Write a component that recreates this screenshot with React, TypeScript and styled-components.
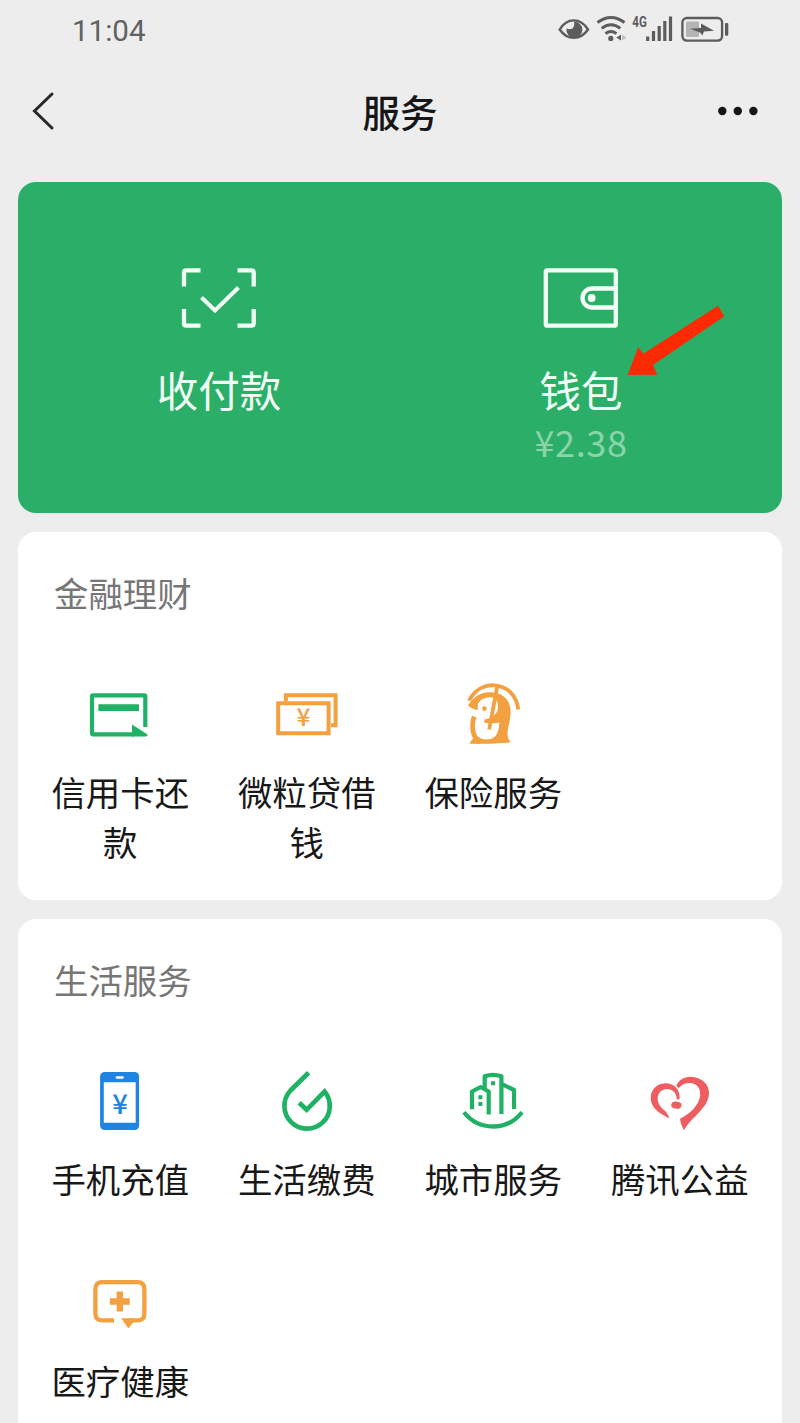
import React from "react";
import styled, { createGlobalStyle } from "styled-components";

const GlobalStyle = createGlobalStyle`
  * { box-sizing: border-box; }
  body {
    margin: 0;
    background: #ededed;
    font-family: "Noto Sans CJK SC", "Noto Sans", sans-serif;
  }
`;

const GREEN = "#1fb264";
const ORANGE = "#f2a040";
const BLUE = "#1f83e0";
const RED = "#ee5e60";
const STATUS = "#5c5c5c";

const Screen = styled.main`
  width: 800px;
  height: 1423px;
  overflow: hidden;
  background: #ededed;
`;

const StatusBar = styled.div`
  display: flex;
  align-items: center;
  justify-content: space-between;
  height: 60px;
  padding: 0 71px 0 72px;
`;

const Clock = styled.span`
  font: 400 29.5px/36px Roboto, sans-serif;
  color: #616161;
  padding-top: 2px;
`;

const StatusIcons = styled.div`
  display: flex;
  align-items: center;
  height: 60px;
`;

const NavBar = styled.header`
  display: grid;
  grid-template-columns: 100px 1fr 100px;
  align-items: center;
  height: 104px;
`;

const NavIcon = styled.div<{ $end?: boolean }>`
  display: flex;
  justify-content: ${(p) => (p.$end ? "flex-end" : "flex-start")};
  padding: ${(p) => (p.$end ? "0 40px 2px 0" : "0 0 2px 30px")};
`;

const PageTitle = styled.h1`
  margin: 0;
  padding-bottom: 2px;
  text-align: center;
  font-size: 37.5px;
  line-height: 50px;
  font-weight: 500;
  color: #161616;
`;

const Content = styled.div`
  display: flex;
  flex-direction: column;
  gap: 19px;
  padding: 18px 18px 0;
`;

const PayCard = styled.section`
  position: relative;
  display: grid;
  grid-template-columns: 1fr 1fr;
  height: 331px;
  padding: 76px 20px 0;
  border-radius: 18px;
  background: #2bae67;
`;

const PayItem = styled.div`
  display: flex;
  flex-direction: column;
  align-items: center;
`;

const PayLabel = styled.div`
  margin-top: 21px;
  font-size: 41.5px;
  line-height: 60px;
  color: #f2fff6;
`;

const Amount = styled.div`
  font-size: 36px;
  line-height: 44px;
  letter-spacing: 0.6px;
  color: #8bd3a9;
`;

const Arrow = styled.svg`
  position: absolute;
  left: 609px;
  top: 123px;
`;

const Card = styled.section<{ $tall?: boolean }>`
  height: ${(p) => (p.$tall ? "560px" : "368px")};
  flex-shrink: 0;
  padding: 35px 9px 0;
  border-radius: 18px;
  background: #fff;
`;

const CardTitle = styled.h2`
  margin: 0 0 62px;
  padding-left: 27px;
  font-size: 34.4px;
  line-height: 50px;
  font-weight: 400;
  color: #767676;
`;

const Grid = styled.div`
  display: grid;
  grid-template-columns: repeat(4, 1fr);
  row-gap: 65px;
`;

const Item = styled.div`
  display: flex;
  flex-direction: column;
  align-items: center;
  gap: 15px;
  padding: 0 20px;
`;

const ItemLabel = styled.div`
  font-size: 34.4px;
  line-height: 50px;
  text-align: center;
  color: #181818;
`;

const Icon = ({ children }: { children: React.ReactNode }) => (
  <svg width="72" height="72" viewBox="0 0 72 72" fill="none">
    {children}
  </svg>
);

const Yen = ({ x, y, size, color }: { x: number; y: number; size: number; color: string }) => (
  <text
    x={x}
    y={y}
    fontSize={size}
    fill={color}
    textAnchor="middle"
    fontFamily='"Noto Sans CJK SC", sans-serif'
    fontWeight="500"
  >
    ¥
  </text>
);

const CreditCardIcon = () => (
  <Icon>
    <path d="M61.300 48V17.300q0-1-1-1H9q-1 0-1 1V54.300q0 1 1 1H50" stroke={GREEN} strokeWidth="4.200" />
    <path d="M14.4 25.3H55V32H14.4Z" fill={GREEN} />
    <path d="M48 45.500 63.500 55.500Q64 57.300 61.500 57.400H48Z" fill={GREEN} />
  </Icon>
);

const LoanIcon = () => (
  <Icon>
    <path d="M7.2 24.3H57.6V54.3H7.2Z" stroke={ORANGE} strokeWidth="4" />
    <path d="M14.900 22.300V16.200H64.600V46.200H60" stroke={ORANGE} strokeWidth="4" />
    <Yen x={32.6} y={47.2} size={24.5} color={ORANGE} />
  </Icon>
);

const InsuranceIcon = () => (
  <Icon>
    <path d="M12 21.700C17.500 11 27 5.800 37 6.300C50.500 7 59.500 16.500 61.300 30.500" stroke={ORANGE} strokeWidth="3.800" />
    <path d="M11 26.500C17 17 25 12.500 34.500 13.300C46.500 14 53.300 21.500 53.600 32C53.800 42 50.300 49 50.500 55C50.600 59 52 61.500 53.800 63.200C42 64.800 24 65.200 12.700 64.800C13 62.500 15 60.700 16.200 59.500C12 52 13 43 15 36.500L19.500 38.500C17.500 44 17 51 20 56.500C24 61.800 34 61.800 38.500 57C42 52.500 42 46 42.500 43.500C38.500 44.500 34 44.800 27 43.500L27.500 40.500C33 39.500 38.500 36.500 40.500 31.500C42 25 40 18.500 34.500 18.200C27.500 18 23.500 20.500 21 24.500L20.500 31C17 30.500 14 29 11 26.500Z" fill={ORANGE} />
    <path d="M40.300 7 32.200 50.500" stroke={ORANGE} strokeWidth="3.800" />
    <circle cx="27.400" cy="29.600" r="2.300" fill={ORANGE} />
  </Icon>
);

const PhoneIcon = () => (
  <Icon>
    <rect x="16.1" y="6" width="39" height="58" rx="4.5" fill={BLUE} />
    <path d="M19.800 16.300H51.700V56.700H19.800Z" fill="#fff" />
    <rect x="31.700" y="10.200" width="8" height="2.500" rx="1" fill="#fff" />
    <Yen x={36} y={47.5} size={27.5} color={BLUE} />
  </Icon>
);

const DropIcon = () => (
  <Icon>
    <path d="M37.600 6.700 19.500 24.500A22.700 22.700 0 1 0 53.600 25.500L35.600 43.800 28.200 36.800" stroke={GREEN} strokeWidth="4.700" />
  </Icon>
);

const CityIcon = () => (
  <Icon>
    <path d="M7 46.300Q18 60.500 36 60.500T65 46.300" stroke={GREEN} strokeWidth="4.300" />
    <path d="M15 43.300V25.500L23.700 21 31.700 25.500V48.500M27.700 23V10.300Q36 7.500 44.400 10.300V48M44.400 17.800 57 24V43" stroke={GREEN} strokeWidth="4.200" strokeLinejoin="round" />
    <path d="M34 15.300h4v4h-4ZM21.400 29.300h4v4h-4ZM21.400 36h4v4h-4Z" fill={GREEN} />
  </Icon>
);

const HeartIcon = () => (
  <Icon>
    <path d="M35.600 33.300C36.500 23.500 30 17 21.200 17.200C12.500 17.500 6.500 24 6.700 32C7 43.500 18 48.500 25.600 52.500C24.500 50 23.500 48 21.700 45.500C17.500 42 13.700 38.500 13.700 32.500C13.800 26.500 18 23 23 23C28.500 23 32.500 26.500 32.800 33.500Z" fill={RED} />
    <path d="M32.200 20C34.500 14 40 10.500 47 10.700C57.500 11 65 18 65 27C65 42 48 50 40 64.300C38 60.500 36 56.500 36.200 52.500C45 48.500 56 39 56.200 28C56.300 21.500 52 17.200 46 17C40.500 16.800 37.500 19 34.800 22Z" fill={RED} />
    <path d="M28 36.500Q32.500 34 37.200 37.200Q38.500 40 35.500 42.500Q28.500 43.500 27 39.500Z" fill={RED} />
  </Icon>
);

const MedicalIcon = () => (
  <Icon>
    <path d="M30 52.400H18.400Q11.400 52.400 11.400 45.400V21.200Q11.400 14.200 18.400 14.200H53.400Q60.400 14.200 60.400 21.200V45.400Q60.400 52.400 53.400 52.400H43" stroke={ORANGE} strokeWidth="4.300" />
    <path d="M37.200 50.300H49V54.500L44.400 60.500Z" fill={ORANGE} />
    <path d="M35.800 23.500V43.500M25.800 33.500H45.800" stroke={ORANGE} strokeWidth="6.300" />
  </Icon>
);

const StatusGlyphs = () => (
  <svg width="172" height="40" viewBox="557 10 172 40" fill="none">
    <path d="M559.700 29.500C567 17.300 580.500 17.300 588 29.500C580.500 40.500 567 40.500 559.700 29.500Z" stroke={STATUS} strokeWidth="2.400" />
    <path d="M574 21.700A8 8 0 1 1 566.500 28.500Q569.500 30 572.500 28.500Q575 25.500 574 21.700Z" fill={STATUS} />
    <path d="M597.500 22.500Q611 12.500 624.500 22.500M601.700 28.300Q611 21 620.300 28.300M605.500 33.700Q611 29.500 616.500 33.700" stroke={STATUS} strokeWidth="2.900" />
    <circle cx="610.800" cy="38.400" r="2.600" fill={STATUS} />
    <path d="M621 34.800V40.500L616.200 37.600Z" fill={STATUS} />
    <path d="M622.200 34.800V40.500L626.500 37.600Z" fill="#bdbdbd" />
    <text x="632.300" y="27.200" fontSize="14.500" fontWeight="700" fontFamily="Roboto, sans-serif" fill={STATUS} textLength="14.500" lengthAdjust="spacingAndGlyphs">4G</text>
    <path d="M647.700 36.500V41M653.500 31V41M659.200 26V41M664.800 21V41M670.500 16.500V41" stroke={STATUS} strokeWidth="3.200" />
    <rect x="682.400" y="18" width="39.700" height="22.600" rx="4.500" stroke={STATUS} strokeWidth="2.400" />
    <rect x="686" y="21.500" width="13" height="15.500" rx="1.500" fill="#b4b4b4" />
    <path d="M690 28.700 701 28 701 23.500 714 30.700 704 31.500 702.300 35.500 700 32.500Z" fill={STATUS} />
    <rect x="725" y="23" width="3.300" height="12.700" rx="1" fill={STATUS} />
  </svg>
);

const finance = [
  { label: "信用卡还款", icon: <CreditCardIcon /> },
  { label: "微粒贷借钱", icon: <LoanIcon /> },
  { label: "保险服务", icon: <InsuranceIcon /> },
];

const life = [
  { label: "手机充值", icon: <PhoneIcon /> },
  { label: "生活缴费", icon: <DropIcon /> },
  { label: "城市服务", icon: <CityIcon /> },
  { label: "腾讯公益", icon: <HeartIcon /> },
  { label: "医疗健康", icon: <MedicalIcon /> },
];

const ServiceGroup = ({ title, items, tall }: { title: string; items: typeof finance; tall?: boolean }) => (
  <Card $tall={tall}>
    <CardTitle>{title}</CardTitle>
    <Grid>
      {items.map((item) => (
        <Item key={item.label}>
          {item.icon}
          <ItemLabel>{item.label}</ItemLabel>
        </Item>
      ))}
    </Grid>
  </Card>
);

export default function App() {
  return (
    <Screen>
      <GlobalStyle />
      <StatusBar>
        <Clock>11:04</Clock>
        <StatusIcons>
          <StatusGlyphs />
        </StatusIcons>
      </StatusBar>
      <NavBar>
        <NavIcon>
          <svg width="26" height="40" viewBox="0 0 26 40" fill="none">
            <path d="M22 3 4.500 20 22 37" stroke="#282828" strokeWidth="3" strokeLinecap="round" />
          </svg>
        </NavIcon>
        <PageTitle>服务</PageTitle>
        <NavIcon $end>
          <svg width="44" height="10" viewBox="0 0 44 10" fill="#161616">
            <circle cx="6.300" cy="5" r="4.200" />
            <circle cx="21.800" cy="5" r="4.200" />
            <circle cx="37.400" cy="5" r="4.200" />
          </svg>
        </NavIcon>
      </NavBar>
      <Content>
        <PayCard>
          <PayItem>
            <svg width="80" height="80" viewBox="0 0 80 80" fill="none" stroke="#f2fff6" strokeWidth="4.300">
              <path d="M5 28.500V14.500Q5 12.300 7.200 12.300H21.500M58.500 12.300H72.500Q74.700 12.300 74.700 14.500V28.500M74.700 51V65.500Q74.700 67.700 72.500 67.700H58.500M21.500 67.700H7.200Q5 67.700 5 65.500V51" />
              <path d="M22.500 39.500 36 52.500 59.500 29.500" strokeWidth="4" />
            </svg>
            <PayLabel>收付款</PayLabel>
          </PayItem>
          <PayItem>
            <svg width="80" height="80" viewBox="0 0 80 80" fill="none" stroke="#f2fff6" strokeWidth="4.300">
              <rect x="4.800" y="12.300" width="70" height="55.400" rx="1.500" />
              <path d="M74 30.500H51A9.500 9.500 0 0 0 51 49.500H74" />
              <circle cx="50.700" cy="40" r="3.900" fill="#f2fff6" stroke="none" />
            </svg>
            <PayLabel>钱包</PayLabel>
            <Amount>¥2.38</Amount>
          </PayItem>
          <Arrow width="100" height="72" viewBox="0 0 100 72">
            <path d="M.7 70 11.300 42 16.300 48.700 91 .7 97.300 11.300 26 60 30.300 69.700Z" fill="#fb2a05" />
          </Arrow>
        </PayCard>
        <ServiceGroup title="金融理财" items={finance} />
        <ServiceGroup title="生活服务" items={life} tall />
      </Content>
    </Screen>
  );
}
